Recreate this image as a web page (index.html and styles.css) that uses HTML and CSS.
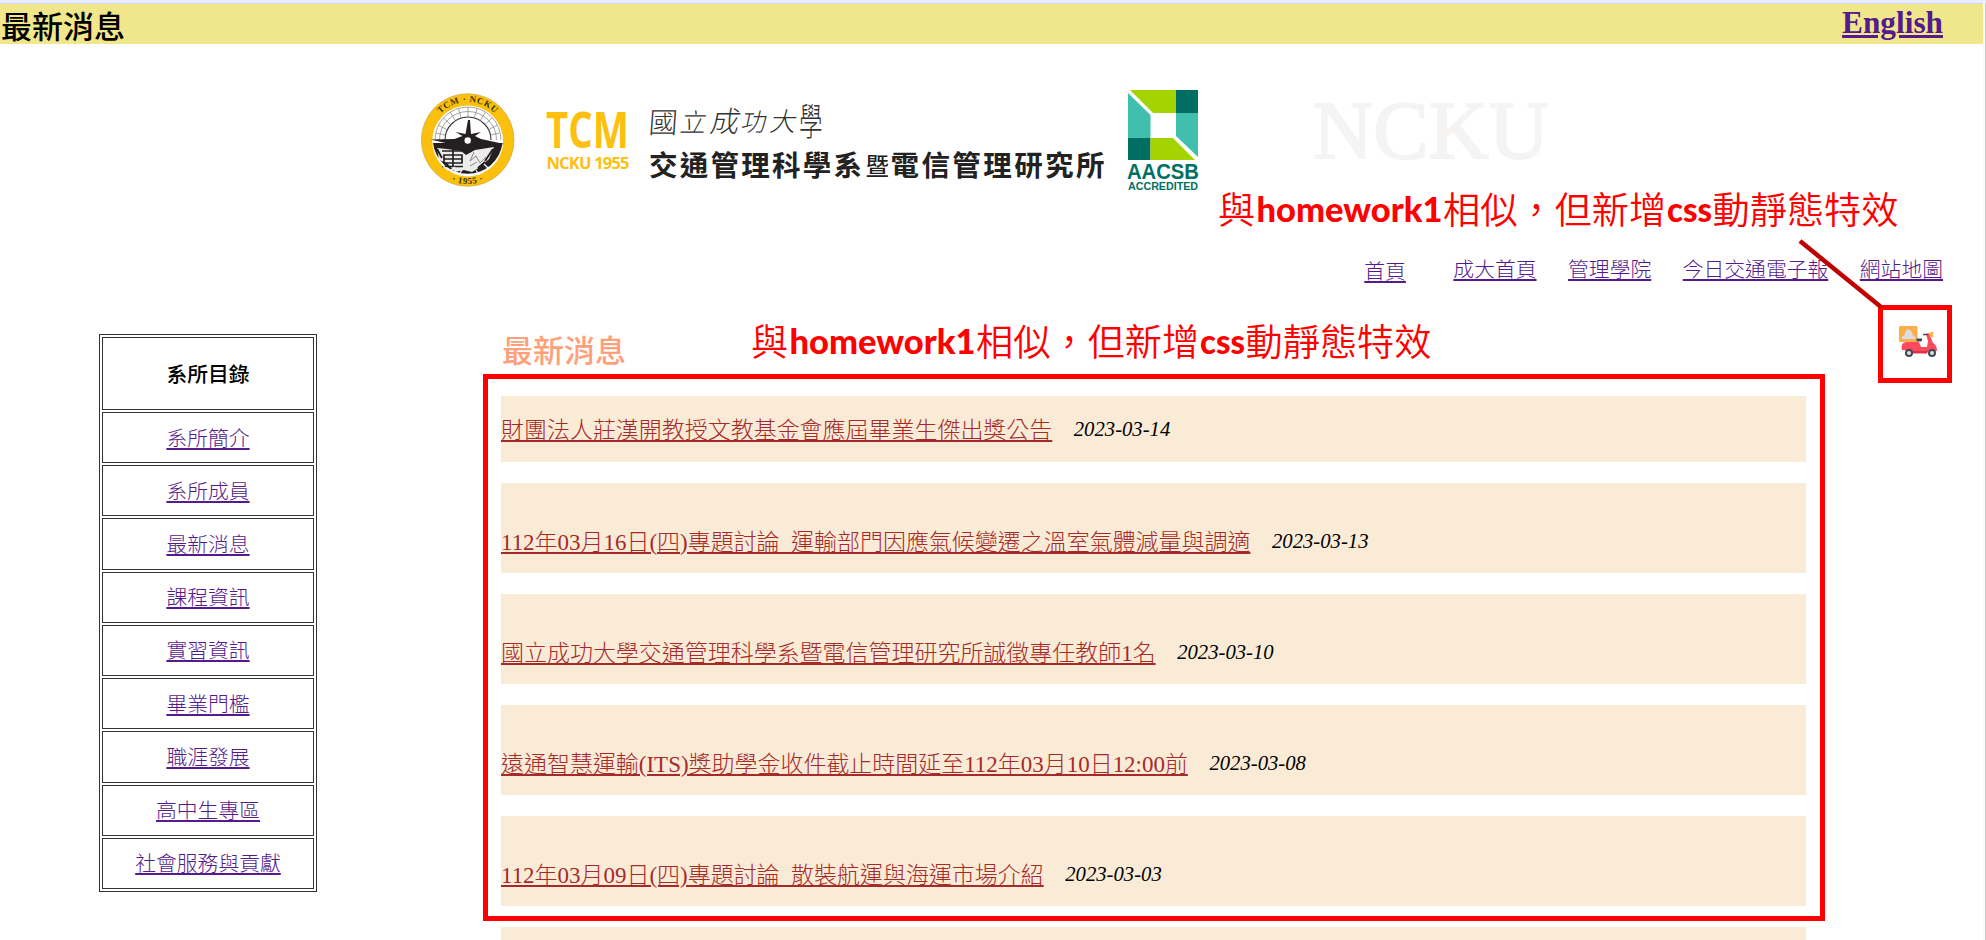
FILE: index.html
```html
<!DOCTYPE html>
<html lang="zh-Hant">
<head>
<meta charset="utf-8">
<title>最新消息</title>
<link rel="stylesheet" href="styles.css">
</head>
<body>
<div class="page">
  <header class="topbar">
    <span class="topbar-title">最新消息</span>
    <a class="topbar-lang" href="#">English</a>
  </header>

  <div class="banner">
    <svg class="logo" width="1150" height="130" viewBox="410 80 1150 130">
      <defs>
        <path id="arcTop" d="M429.7 140a38 38 0 0 1 76 0"/>
        <path id="arcBottom" d="M423.700 140a44 44 0 0 0 88 0"/>
      </defs>
      <circle cx="467.700" cy="140" r="46.300" fill="#fbc00d" stroke="#c9a950" stroke-width=".7"/>
      <circle cx="467.700" cy="141" r="35.500" fill="#fff"/>
      <g fill="none" stroke="#8d8d8d" stroke-width=".8">
        <path d="M435 140a33 33 0 0 1 66 0"/>
        <path d="M439.500 140a28.500 28.500 0 0 1 57 0"/>
        <path d="M445 140a23 23 0 0 1 46 0" stroke="#333" stroke-width="1.100"/>
        <path d="M436 133l9 2M438.500 125.500l8.500 4M443.500 118l7 6.500M450 112l5 8M458.500 108.500l2.500 9M468 107v10M477 108.500l-2.500 9M485.500 112l-5 8M492 118l-7 6.500M497 125.500l-8.500 4M499.500 133l-9 2"/>
      </g>
      <path d="M433 143h69.500a35 35 0 0 1-69.500 0z" fill="#242021"/>
      <path d="M430.500 139.500l24-.5 8-3-7-4 10 2 2.500-14h2l1 14 10-2-6 4 6 3 23 5-24 2-12 4.500-12-5z" fill="#242021"/>
      <circle cx="467.700" cy="140.500" r="3.200" fill="#fff"/>
      <path d="M437 148l10 1 14 2 5 4 9-5 19-3-5 12-9 8-8 5-8-2-9 2-8-9-8-3z" fill="#ececec"/>
      <path d="M442 151h20M444 155h18v8h-18zM453 149v17M444 159h18M442 166.500h21" fill="none" stroke="#242021" stroke-width="1.700"/>
      <path d="M474 152l-4 9 6-5 4 7 6-6M470 166l7-4" fill="none" stroke="#8a8a8a" stroke-width="1"/>
      <path d="M493 149l-8 12M485 162l-7 6M437 149l5 9" fill="none" stroke="#242021" stroke-width="1.900"/>
      <path d="M442 165l6 5M450 171l5-4M459 175l3-5M479 175l-3-5M488 168l-4-4" stroke="#fff" stroke-width="1.200"/>
      <text class="seal-text"><textPath href="#arcTop" startOffset="50%" text-anchor="middle">TCM · NCKU</textPath></text>
      <text class="seal-text"><textPath href="#arcBottom" startOffset="50%" text-anchor="middle">· 1955 ·</textPath></text>

      <text class="tcm" x="546" y="147.500" textLength="83" lengthAdjust="spacingAndGlyphs">TCM</text>
      <text class="tcm-sub" x="546.500" y="169" textLength="83" lengthAdjust="spacing">NCKU 1955</text>

      <g class="brush">
        <text transform="translate(648 133) skewX(-4)" font-size="29">國</text>
        <text transform="translate(679 132) skewX(-12)" font-size="26">立</text>
        <text transform="translate(709 132) skewX(-12)" font-size="29">成</text>
        <text transform="translate(740 131) skewX(-12)" font-size="25">功</text>
        <text transform="translate(769 131) skewX(-12)" font-size="26">大</text>
        <text transform="translate(799 135) scale(.62 1)" font-size="38">學</text>
      </g>
      <text class="dept" x="649" y="175.500" textLength="213" lengthAdjust="spacing">交通管理科學系</text>
      <text class="dept-small" x="865.500" y="175">暨</text>
      <text class="dept" x="890.500" y="175.500" textLength="214" lengthAdjust="spacing">電信管理研究所</text>

      <path d="M1130 90h46v23h-23z" fill="#a4d400"/>
      <path d="M1176 90h22v23h-22z" fill="#006e62"/>
      <path d="M1128 93l22.500 22v23H1128z" fill="#40bfae"/>
      <path d="M1176 113h22v44l-22-21z" fill="#40bfae"/>
      <path d="M1128 138h22.500v22H1128z" fill="#006e62"/>
      <path d="M1150.500 138h22.500l22 22h-44.500z" fill="#a4d400"/>
      <text class="aacsb" x="1127" y="178.500" textLength="72" lengthAdjust="spacingAndGlyphs">AACSB</text>
      <text class="aacsb-sub" x="1128" y="189.500" textLength="70" lengthAdjust="spacingAndGlyphs">ACCREDITED</text>

      <text class="ncku" x="1313" y="157.500" textLength="236" lengthAdjust="spacing">NCKU</text>
    </svg>
  </div>

  <nav class="links">
    <a class="home" href="#">首頁</a>
    <a class="uni" href="#">成大首頁</a>
    <a href="#">管理學院</a>
    <a href="#">今日交通電子報</a>
    <a href="#">網站地圖</a>
  </nav>

  <div class="content">
    <aside class="menu">
      <div class="menu-head">系所目錄</div>
      <div class="menu-cell"><a href="#">系所簡介</a></div>
      <div class="menu-cell"><a href="#">系所成員</a></div>
      <div class="menu-cell"><a href="#">最新消息</a></div>
      <div class="menu-cell"><a href="#">課程資訊</a></div>
      <div class="menu-cell"><a href="#">實習資訊</a></div>
      <div class="menu-cell"><a href="#">畢業門檻</a></div>
      <div class="menu-cell"><a href="#">職涯發展</a></div>
      <div class="menu-cell"><a href="#">高中生專區</a></div>
      <div class="menu-cell"><a href="#">社會服務與貢獻</a></div>
    </aside>

    <main class="news">
      <h2 class="news-title">最新消息</h2>
      <div class="news-item first"><a href="#">財團法人莊漢開教授文教基金會應屆畢業生傑出獎公告</a><time>2023-03-14</time></div>
      <div class="news-item"><a href="#">112年03月16日(四)專題討論_運輸部門因應氣候變遷之溫室氣體減量與調適</a><time>2023-03-13</time></div>
      <div class="news-item"><a href="#">國立成功大學交通管理科學系暨電信管理研究所誠徵專任教師1名</a><time>2023-03-10</time></div>
      <div class="news-item"><a href="#">遠通智慧運輸(ITS)獎助學金收件截止時間延至112年03月10日12:00前</a><time>2023-03-08</time></div>
      <div class="news-item"><a href="#">112年03月09日(四)專題討論_散裝航運與海運市場介紹</a><time>2023-03-03</time></div>
      <div class="news-item"></div>
    </main>

    <svg class="scooter" width="40" height="32" viewBox="0 0 40 32">
      <path d="M4 19q1-3 5-3h12l2 5h6l1-6-2-7 3-1 4 10q4 2 4 8h-6q-3-1-4 2H12q-2-3-8-3-1-3 0-5z" fill="#fb4a5c"/>
      <path d="M11 25h19l-1 2.500H12z" fill="#dd3148"/>
      <rect x="1" y="0" width="18.500" height="16" rx="1.500" fill="#fdae49"/>
      <path d="M3.500 13q0-3 3-4 1-5 4-6 4 2 4 6 3 1 3 4z" fill="#d9dce1"/>
      <path d="M18.500 12.500h5.500q1 2-1 3h-4.500z" fill="#41464f"/>
      <path d="M25 8.500h5" stroke="#41464f" stroke-width="1.400"/>
      <path d="M32 6h3.500v5H32z" fill="#fdb94f"/>
      <circle cx="11" cy="27" r="3" fill="#dfe2e6" stroke="#41464f" stroke-width="2"/>
      <circle cx="34" cy="27" r="3" fill="#dfe2e6" stroke="#41464f" stroke-width="2"/>
    </svg>
  </div>

  <div class="frame frame-news"></div>
  <div class="frame frame-scooter"></div>
  <svg class="pointer" width="90" height="75" viewBox="0 0 90 75"><path d="M4 5l81 66" stroke="#c00000" stroke-width="4.500"/></svg>
  <svg class="note note-top" width="700" height="64" viewBox="0 0 700 64">
    <text x="0" y="40">與</text>
    <text class="latin" x="38.500" y="38" textLength="186" lengthAdjust="spacingAndGlyphs">homework1</text>
    <text x="225" y="40">相似，但新增</text>
    <text class="latin" x="449" y="38" textLength="45" lengthAdjust="spacingAndGlyphs">css</text>
    <text x="494.500" y="40">動靜態特效</text>
  </svg>
  <svg class="note note-news" width="700" height="64" viewBox="0 0 700 64">
    <text x="0" y="40">與</text>
    <text class="latin" x="38.500" y="38" textLength="186" lengthAdjust="spacingAndGlyphs">homework1</text>
    <text x="225" y="40">相似，但新增</text>
    <text class="latin" x="449" y="38" textLength="45" lengthAdjust="spacingAndGlyphs">css</text>
    <text x="494.500" y="40">動靜態特效</text>
  </svg>
  <div class="scrollbar"></div>
</div>
</body>
</html>
```
FILE: styles.css
```css
* { box-sizing: border-box; }

body {
  margin: 0;
  background: #fff;
  font-family: "Liberation Serif", "Noto Sans CJK TC", serif;
  font-weight: 300;
}

.page {
  position: relative;
  width: 1986px;
  height: 940px;
  overflow: hidden;
  border-top: 3px solid #e9edf8;
}

.topbar {
  display: flex;
  justify-content: space-between;
  width: 1983px;
  height: 41px;
  padding: 0 40px 0 1px;
  background: #f0e68c;
  border-top: 1px solid #d3d9e6;
}

.topbar-title {
  font: 500 31px/41px "Noto Sans CJK TC", sans-serif;
}

.topbar-lang {
  font-size: 31.3px;
  font-weight: 700;
  line-height: 38px;
  color: #551a8b;
  text-decoration-thickness: 3px;
  text-underline-offset: 2px;
}

.banner {
  height: 166px;
  padding: 36px 0 0 410px;
}

.logo { display: block; }
.seal-text { font: 700 9px "Liberation Serif", serif; fill: #3a3010; letter-spacing: .6px; }
.tcm { font: 700 49.500px "Open Sans", sans-serif; fill: #fdc010; }
.tcm-sub { font: 700 16.500px "Open Sans", sans-serif; fill: #fdc010; }
.brush { font-family: "Noto Sans CJK TC", sans-serif; font-weight: 300; fill: #333; }
.dept { font: 700 28.500px "Noto Sans CJK TC", sans-serif; fill: #222; }
.dept-small { font: 500 23.500px "Noto Sans CJK TC", sans-serif; fill: #222; }
.aacsb { font: 700 22px "Liberation Sans", sans-serif; fill: #007163; }
.aacsb-sub { font: 700 10.500px "Liberation Sans", sans-serif; fill: #007163; }
.ncku { font: 400 83px "Liberation Serif", serif; fill: #f5f4f3; stroke: #f5f4f3; stroke-width: 2px; }

.links {
  display: flex;
  justify-content: flex-end;
  gap: 31.500px;
  height: 124px;
  padding: 45px 43px 0 0;
}

.links a, .menu a {
  font-size: 20.8px;
  line-height: 30px;
  color: #551a8b;
  text-decoration-thickness: 2px;
  text-underline-offset: 2px;
}

.links .home { margin: 2px 16px 0 0; }

.content {
  display: flex;
  align-items: flex-start;
}

.menu {
  display: flex;
  flex-direction: column;
  gap: 2px;
  width: 218px;
  height: 558px;
  margin-left: 99px;
  padding: 2px;
  border: 1.300px solid #333;
}

.menu-head, .menu-cell {
  display: flex;
  align-items: center;
  justify-content: center;
  flex: 1 1 0;
  border: 1.300px solid #333;
}

.menu-head {
  flex: 0 0 73px;
  padding-bottom: 2px;
  font: 500 20.800px "Noto Sans CJK TC", sans-serif;
}

.menu-cell { padding-top: 2px; }

.news {
  width: 1305px;
  margin-left: 184px;
}

.news-title {
  height: 62px;
  margin: 0;
  padding-left: 1px;
  font: 500 31px/30px "Noto Sans CJK TC", sans-serif;
  color: #ffa07a;
}

.news-item {
  display: flex;
  align-items: flex-end;
  gap: 21.500px;
  height: 90px;
  margin-bottom: 21.200px;
  padding-bottom: 15px;
  background: #faebd7;
}

.news-item.first { height: 66px; margin-bottom: 20.500px; padding-bottom: 16.500px; }

.news-item a {
  font-size: 22.970px;
  line-height: 30px;
  color: #a52a2a;
  text-decoration-thickness: 2px;
  text-underline-offset: 2px;
}

.news-item time {
  font-size: 20.700px;
  font-style: italic;
  line-height: 30px;
  padding-bottom: 2px;
}

.scooter {
  margin: -8px 0 0 92px;
}

.frame { position: absolute; border: 5px solid #f00; }
.frame-news { left: 483px; top: 371px; width: 1342px; height: 547px; }
.frame-scooter { left: 1878px; top: 302px; width: 74px; height: 78px; }
.pointer { position: absolute; left: 1796px; top: 233px; }

.note { position: absolute; font: 350 37.200px "Noto Sans CJK TC", sans-serif; fill: #f00; }
.note .latin { font: 900 34px Lato, sans-serif; }
.note-top { left: 1218px; top: 181px; }
.note-news { left: 751px; top: 313px; }

.scrollbar {
  position: absolute;
  right: 0;
  top: 0;
  width: 3px;
  height: 940px;
  background: linear-gradient(90deg, #f7f7f7 1px, #fafafa 1px 2px, #c8c8c8 2px);
}
```
